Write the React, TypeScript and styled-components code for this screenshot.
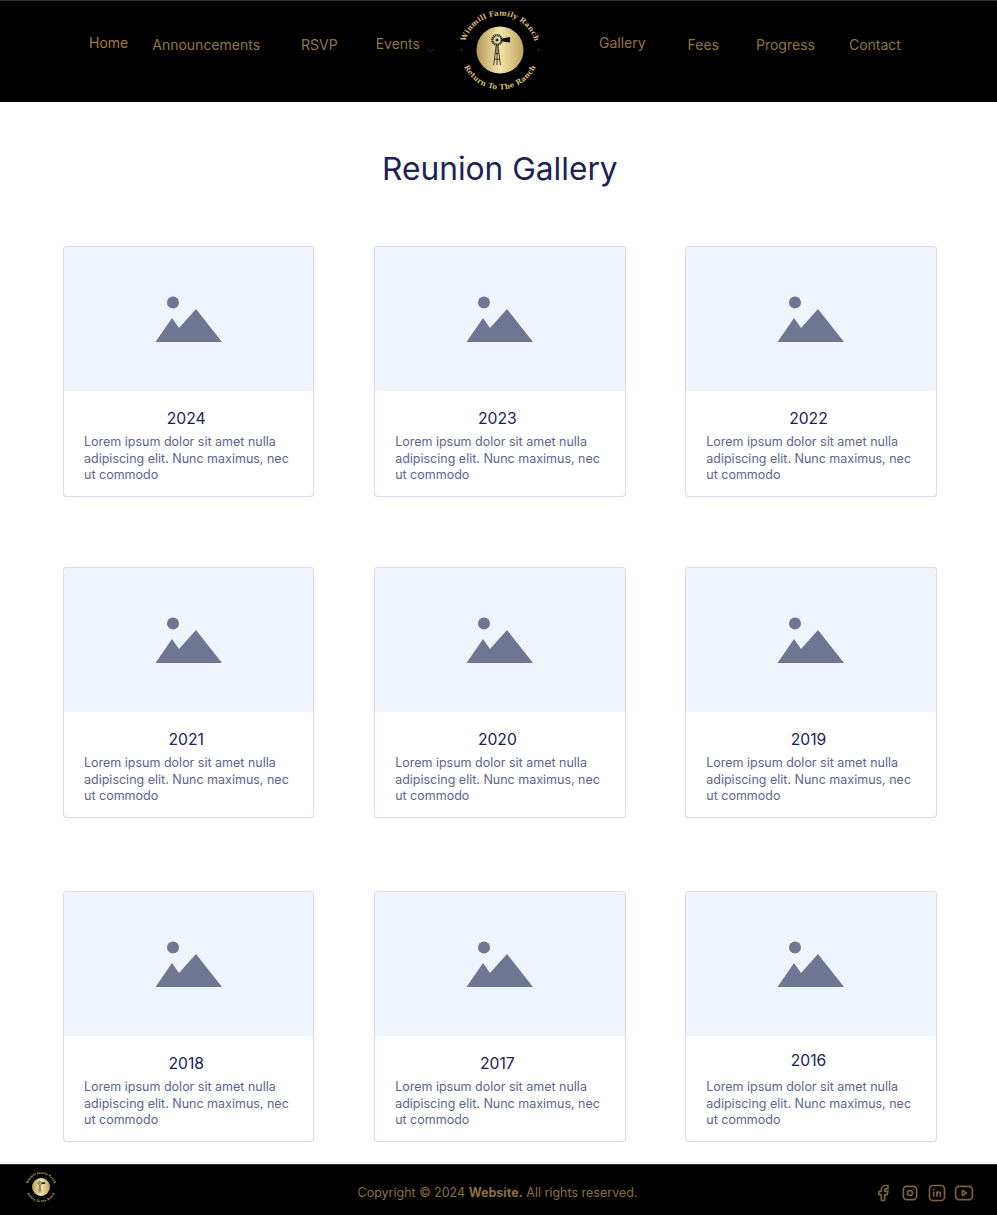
import React from "react";
import styled, { createGlobalStyle } from "styled-components";
import { TbBrandFacebook, TbBrandInstagram, TbBrandLinkedin, TbBrandYoutube } from "react-icons/tb";

const years = [
  { gap: 0, items: [2024, 2023, 2022] },
  { gap: 70, items: [2021, 2020, 2019] },
  { gap: 73, items: [2018, 2017, 2016] },
];

const Logo = ({ size, id }: { size: number; id: string }) => (
  <svg width={size} height={size} viewBox="0 0 100 100">
    <defs>
      <linearGradient id={`${id}-gold`} x1="0" x2="1" y1="0" y2="0">
        <stop offset="0" stopColor="#b39a58" />
        <stop offset="0.5" stopColor="#f3e6ac" />
        <stop offset="1" stopColor="#bfa25c" />
      </linearGradient>
      <path id={`${id}-top`} d="M 7 52 A 43 43 0 0 1 93 52" />
      <path id={`${id}-bottom`} d="M 3 50 A 47 47 0 0 0 97 50" />
    </defs>
    <LogoText>
      <textPath href={`#${id}-top`} startOffset="50%" textAnchor="middle">Winmill Family Ranch</textPath>
    </LogoText>
    <LogoText>
      <textPath href={`#${id}-bottom`} startOffset="50%" textAnchor="middle">Return To The Ranch</textPath>
    </LogoText>
    <circle cx="4" cy="50" r="0.7" fill="#8f7a45" />
    <circle cx="96" cy="50" r="0.7" fill="#8f7a45" />
    <circle cx="50" cy="50" r="28" fill={`url(#${id}-gold)`} />
    <circle cx="46.5" cy="38" r="5.6" fill="none" stroke="#26231a" strokeWidth="2.8" strokeDasharray="1.4 0.7" />
    <circle cx="46.5" cy="38" r="1.8" fill="#26231a" />
    <path d="M51 36.5 L62 34.5 L62 41 L51 39.5 Z" fill="#0d0c08" />
    <path d="M45.5 44 L42.5 68 M47.5 44 L50.5 68 M46.5 44 V68 M44.5 54 H48.5 M43.5 61 H49.5" stroke="#2b281d" strokeWidth="1.1" fill="none" />
  </svg>
);

const PhotoIcon = () => (
  <svg width="68" height="48" viewBox="0 0 68 48">
    <circle cx="18" cy="6.5" r="6" fill="#6f7691" />
    <path d="M0.5 46 L17 22 L24 32 L41 13 L67 46 Z" fill="#6f7691" />
  </svg>
);

export default function App() {
  return (
    <>
      <GlobalStyle />
      <Header>
        <Nav>
          <NavLink $left={89} $lift={2} $bright>Home</NavLink>
          <NavLink $left={24}>Announcements</NavLink>
          <NavLink $left={41}>RSVP</NavLink>
          <NavLink $left={38} $lift={1}>Events</NavLink>
          <Chevron viewBox="0 0 10 6">
            <path d="M1 1 L5 5 L9 1" />
          </Chevron>
          <LogoSlot><Logo size={84} id="head" /></LogoSlot>
          <NavLink $left={58} $lift={2}>Gallery</NavLink>
          <NavLink $left={42}>Fees</NavLink>
          <NavLink $left={37}>Progress</NavLink>
          <NavLink $left={34}>Contact</NavLink>
        </Nav>
      </Header>
      <Main>
        <Title>Reunion Gallery</Title>
        {years.map((row) => (
          <Row key={row.items[0]} $gap={row.gap}>
            {row.items.map((year) => (
              <Card key={year}>
                <Thumb><PhotoIcon /></Thumb>
                <Body>
                  <Year $lift={year === 2016 ? 3 : 0}>{year}</Year>
                  <Text>Lorem ipsum dolor sit amet nulla adipiscing elit. Nunc maximus, nec ut commodo</Text>
                </Body>
              </Card>
            ))}
          </Row>
        ))}
      </Main>
      <Footer>
        <FooterLogo><Logo size={32} id="foot" /></FooterLogo>
        <Copy>Copyright © 2024 <strong>Website.</strong> All rights reserved.</Copy>
        <Socials>
          <TbBrandFacebook size={20} />
          <TbBrandInstagram size={20} />
          <TbBrandLinkedin size={20} />
          <TbBrandYoutube size={20} />
        </Socials>
      </Footer>
    </>
  );
}

const GlobalStyle = createGlobalStyle`
  body {
    margin: 0;
    background: #fff;
    font-family: Inter, "Liberation Sans", sans-serif;
  }
`;

const Header = styled.header`
  height: 102px;
  box-sizing: border-box;
  background: #000;
  border-top: 1px solid #333;
`;

const Nav = styled.nav`
  display: flex;
  align-items: center;
  height: 100%;
`;

const NavLink = styled.a<{ $left: number; $lift?: number; $bright?: boolean }>`
  margin-left: ${(p) => p.$left}px;
  margin-bottom: ${(p) => 14 + (p.$lift ?? 0) * 2}px;
  font-size: 14px;
  color: ${(p) => (p.$bright ? "#a07c3f" : "#94743f")};
`;

const Chevron = styled.svg`
  width: 9px;
  height: 5px;
  margin: 0 0 3px 6px;
  fill: none;
  stroke: #26304f;
  stroke-width: 1.2;
`;

const LogoSlot = styled.div`
  display: flex;
  margin: 0 -1px 3px 23px;
`;

const LogoText = styled.text`
  font-family: "DejaVu Serif", serif;
  font-weight: 700;
  font-size: 8.6px;
  letter-spacing: 0.2px;
  fill: #d8bd78;
`;

const Main = styled.main`
  padding: 50px 60.3px 22px 63px;
`;

const Title = styled.h1`
  margin: 0 0 60px;
  text-align: center;
  font-size: 31.7px;
  line-height: 34px;
  font-weight: 400;
  color: #1c2257;
`;

const Row = styled.div<{ $gap: number }>`
  display: grid;
  grid-template-columns: repeat(3, 251.45px);
  justify-content: space-between;
  margin-top: ${(p) => p.$gap}px;
`;

const Card = styled.article`
  height: 251px;
  box-sizing: border-box;
  border: 1px solid #d9dcec;
  border-radius: 4px;
  box-shadow: 0 0 1px #d9dcec;
  overflow: hidden;
  background: #fff;
`;

const Thumb = styled.div`
  display: flex;
  align-items: center;
  justify-content: center;
  height: 144px;
  box-sizing: border-box;
  padding-top: 2px;
  background: #f0f5fd;
`;

const Body = styled.div`
  display: flex;
  flex-direction: column;
  padding: 18px 20px 0;
`;

const Year = styled.h3<{ $lift: number }>`
  margin: ${(p) => -p.$lift}px 0 ${(p) => p.$lift}px;
  padding-right: 5px;
  text-align: center;
  font-size: 15.7px;
  line-height: 20px;
  font-weight: 400;
  color: #1c2257;
`;

const Text = styled.p`
  margin: 5px 0 0;
  font-size: 12.5px;
  line-height: 16.5px;
  color: #5b6590;
`;

const Footer = styled.footer`
  display: grid;
  grid-template-columns: 1fr auto 1fr;
  align-items: center;
  height: 51px;
  box-sizing: border-box;
  padding: 4px 25px 0 23px;
  background: #000;
  border-top: 1px solid #333;
`;

const FooterLogo = styled.div`
  display: flex;
  margin: 0 0 10px 2px;
`;

const Copy = styled.p`
  margin: 0;
  font-size: 12.5px;
  color: #8c6f3d;
`;

const Socials = styled.div`
  display: flex;
  justify-content: flex-end;
  gap: 7px;
  margin: 2px -2px 0 0;
  color: #7d6236;
`;
